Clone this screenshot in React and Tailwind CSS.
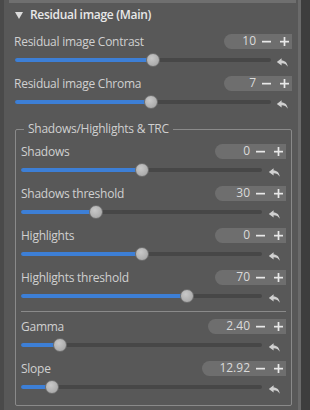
import React from "react";

function ResetIcon() {
  return (
    <svg width="12" height="9" viewBox="0 0 12 9" className="shrink-0">
      <path d="M11.8 8.8 C11.4 4.6 9 2.4 5.6 2.4 L5.6 0.3 L0.8 4 L5.6 7.4 L5.6 5.2 C8.2 5.1 10.2 6.2 11.8 8.8 Z" fill="#d0d0d0" />
    </svg>
  );
}

function SpinBox({ value, width }) {
  return (
    <div
      className="h-[15px] bg-[#6e6e6e] rounded-l-full rounded-r-[3px] flex items-center justify-end pr-[3px] shrink-0"
      style={{ width }}
    >
      <span className="text-[12px] leading-none text-[#dadada] mr-[6px]">{value}</span>
      <svg width="9" height="9" viewBox="0 0 9 9">
        <rect x="0" y="3.8" width="9" height="1.7" fill="#e8e8e8" />
      </svg>
      <svg width="9" height="9" viewBox="0 0 9 9" className="ml-[9px]">
        <rect x="0" y="3.8" width="9" height="1.7" fill="#e8e8e8" />
        <rect x="3.65" y="0" width="1.7" height="9" fill="#e8e8e8" />
      </svg>
    </div>
  );
}

function Slider({ pct, trackClass }) {
  return (
    <div className="flex items-center h-[22px]">
      <div className={`relative h-[4px] bg-[#474747] rounded-full ${trackClass}`}>
        <div className="absolute left-0 top-0 h-[4px] bg-[#3d7fd6] rounded-l-full" style={{ width: pct + "%" }} />
        <div
          className="absolute top-1/2 w-[14px] h-[14px] -ml-[7px] -mt-[7px] rounded-full border border-[#6e6e6e] bg-[radial-gradient(circle_at_40%_35%,#c8c8c8,#a0a0a0)]"
          style={{ left: pct + "%" }}
        />
      </div>
      <div className="flex-1 flex justify-center pt-[4px]">
        <ResetIcon />
      </div>
    </div>
  );
}

function Row({ label, value, boxWidth, pct, trackClass }) {
  return (
    <div className="mb-[4px]">
      <div className="flex items-center justify-between h-[16px]">
        <span className="text-[12px] text-[#d0d0d0] leading-none tracking-[-0.25px] pt-[1px]">{label}</span>
        <SpinBox value={value} width={boxWidth} />
      </div>
      <Slider pct={pct} trackClass={trackClass} />
    </div>
  );
}

export default function App() {
  return (
    <div
      className="w-[310px] h-[410px] bg-[#585858] flex overflow-hidden"
      style={{ fontFamily: '"Open Sans", "Noto Sans", sans-serif' }}
    >
      <div className="w-[4px] bg-[#4a4a4a]" />
      <div className="flex-1 flex flex-col">
        <div className="h-[3px] ml-[5px] mr-[2px] bg-[#6f6f6f]" />
        <div className="pl-[10px] pr-[6px]">
          <div className="flex items-center h-[22px] mt-[1px]">
            <svg width="8" height="7" viewBox="0 0 8 7" className="ml-[1px]">
              <path d="M0 0 L8 0 L4 7 Z" fill="#dcdcdc" />
            </svg>
            <span className="ml-[7px] text-[12px] font-semibold tracking-[-0.3px] text-[#e8e8e8] leading-none">Residual image (Main)</span>
          </div>
          <div className="mt-[7px]">
            <Row label="Residual image Contrast" value="10" boxWidth={68} pct={54} trackClass="w-[256px] ml-[1px]" />
            <Row label="Residual image Chroma" value="7" boxWidth={68} pct={53} trackClass="w-[256px] ml-[1px]" />
          </div>
          <div className="relative mt-[16px] ml-[1px] h-[277px] border border-[#8a8a8a] rounded-[2px] px-[5px] pt-[13px]">
            <span className="absolute -top-[9px] left-[8px] px-[4px] bg-[#585858] text-[12px] leading-[16px] tracking-[-0.25px] text-[#d0d0d0]">
              Shadows/Highlights &amp; TRC
            </span>
            <Row label="Shadows" value="0" boxWidth={71} pct={50} trackClass="w-[241px]" />
            <Row label="Shadows threshold" value="30" boxWidth={71} pct={31} trackClass="w-[241px]" />
            <Row label="Highlights" value="0" boxWidth={71} pct={50} trackClass="w-[241px]" />
            <Row label="Highlights threshold" value="70" boxWidth={71} pct={69} trackClass="w-[241px]" />
            <div className="h-[1px] bg-[#8a8a8a] mt-[2px] mb-[6px]" />
            <Row label="Gamma" value="2.40" boxWidth={78} pct={16} trackClass="w-[241px]" />
            <Row label="Slope" value="12.92" boxWidth={84} pct={13} trackClass="w-[241px]" />
          </div>
        </div>
      </div>
      <div className="w-[3px] bg-[#6a6a6a]" />
      <div className="w-[9px] bg-[#3d3d3d]" />
    </div>
  );
}
